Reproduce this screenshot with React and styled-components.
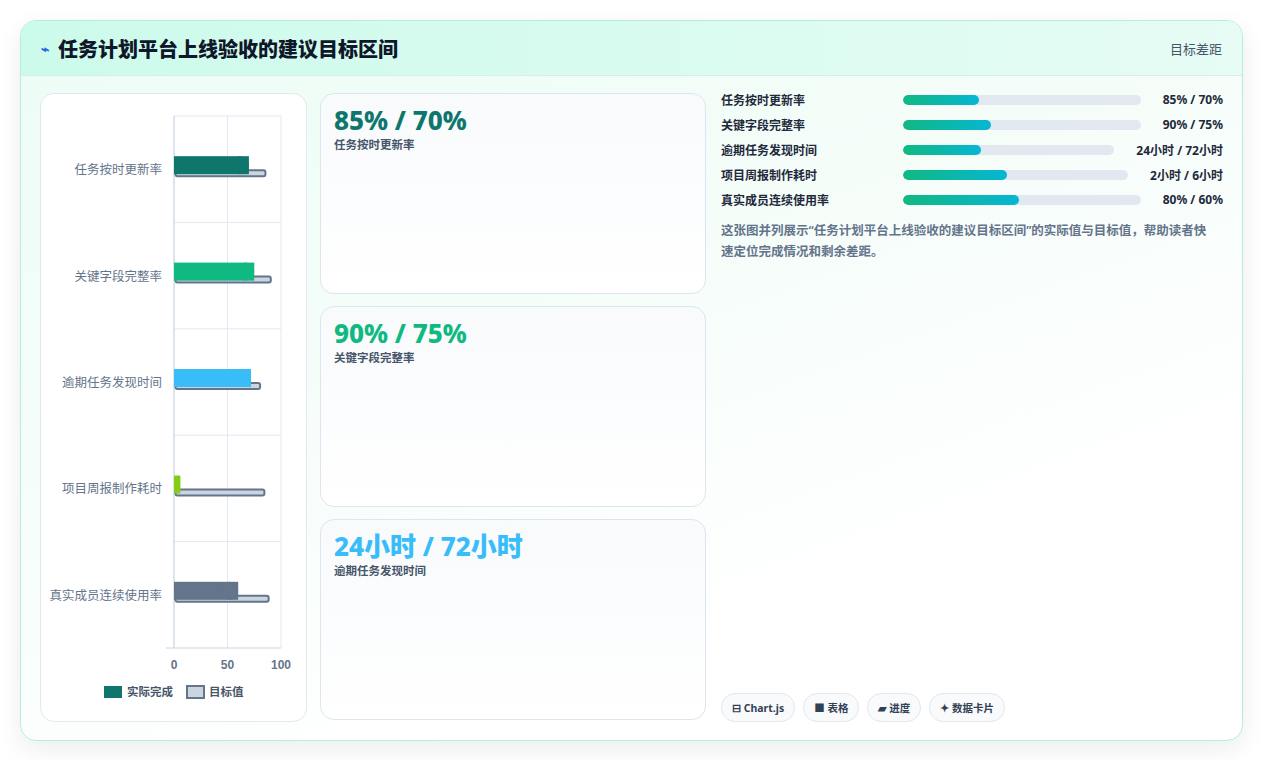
import React from 'react'
import styled, { createGlobalStyle } from 'styled-components'

const Global = createGlobalStyle`
  body { margin: 0; background: #fff; font-family: "Noto Sans", "Noto Sans CJK SC", sans-serif; }
`;

const rows = [
  { name: '任务按时更新率', actual: 70, target: 85, color: '#0f766e', value: '85% / 70%', pct: 32 },
  { name: '关键字段完整率', actual: 75, target: 90, color: '#10b981', value: '90% / 75%', pct: 37 },
  { name: '逾期任务发现时间', actual: 72, target: 80, color: '#38bdf8', value: '24小时 / 72小时', pct: 37 },
  { name: '项目周报制作耗时', actual: 6, target: 84, color: '#84cc16', value: '2小时 / 6小时', pct: 46 },
  { name: '真实成员连续使用率', actual: 60, target: 88, color: '#64748b', value: '80% / 60%', pct: 49 },
];

const cards = [
  { value: '85% / 70%', label: '任务按时更新率', color: '#0f766e' },
  { value: '90% / 75%', label: '关键字段完整率', color: '#10b981' },
  { value: '24小时 / 72小时', label: '逾期任务发现时间', color: '#38bdf8' },
];

function Chart() {
  const x0 = 133, w = 107, top = 22, rowH = 106.4;
  return (
    <svg width="267" height="627" viewBox="0 0 267 627">
      {[0, 50, 100].map((v) => (
        <line key={v} x1={x0 + v * w / 100} x2={x0 + v * w / 100} y1={top} y2={554} stroke="#e2e8f0" />
      ))}
      {rows.map((r, i) => (
        <line key={i} x1={x0} x2={x0 + w} y1={top + i * rowH} y2={top + i * rowH} stroke="#e2e8f0" />
      ))}
      <line x1={x0} x2={x0} y1={top} y2={554} stroke="#cbd5e1" />
      <line x1={x0 - 8} x2={x0 + w} y1={554} y2={554} stroke="#cbd5e1" />
      {rows.map((r, i) => {
        const cy = top + i * rowH + rowH / 2;
        const aw = r.actual * w / 100;
        const tw = r.target * w / 100;
        const rad = Math.min(9, aw);
        return (
          <g key={r.name}>
            <text x={x0 - 12} y={cy + 5} textAnchor="end" fontSize="12.5" fill="#64748b" fontFamily="Noto Sans CJK SC, sans-serif">{r.name}</text>
            <rect x={x0 + 1.5} y={cy + 1} width={tw - 1} height={6} rx={2} fill="#cbd5e1" stroke="#64748b" strokeWidth="2" />
            <rect x={x0} y={cy - 13} width={aw} height={18} rx={rad === 9 ? 0 : 1} fill={r.color} />
            {rad === 9 && <rect x={x0 + aw - 18} y={cy - 13} width={18} height={18} rx={9} fill={r.color} />}
          </g>
        );
      })}
      {[0, 50, 100].map((v) => (
        <text key={v} x={x0 + v * w / 100} y={575} textAnchor="middle" fontSize="12" fontWeight="700" fill="#64748b" fontFamily="Liberation Sans, sans-serif">{v}</text>
      ))}
      <rect x={63} y={592} width={18} height={12} fill="#0f766e" />
      <text x={86} y={602} fontSize="11.5" fill="#475569" fontWeight="700" fontFamily="Noto Sans CJK SC, sans-serif">实际完成</text>
      <rect x={146} y={592} width={17} height={12} fill="#cbd5e1" stroke="#64748b" strokeWidth="2" />
      <text x={168} y={602} fontSize="11.5" fill="#475569" fontWeight="700" fontFamily="Noto Sans CJK SC, sans-serif">目标值</text>
    </svg>
  );
}

export default function App() {
  return (
    <>
      <Global />
      <Page>
        <Frame>
          <Header>
            <Title><Spark>⌁</Spark>任务计划平台上线验收的建议目标区间</Title>
            <HeaderTag>目标差距</HeaderTag>
          </Header>
          <Body>
            <ChartCard><Chart /></ChartCard>
            <CardCol>
              {cards.map((c) => (
                <StatCard key={c.label}>
                  <StatValue color={c.color}>{c.value}</StatValue>
                  <StatLabel>{c.label}</StatLabel>
                </StatCard>
              ))}
            </CardCol>
            <Side>
              {rows.map((r) => (
                <ProgRow key={r.name}>
                  <ProgLabel>{r.name}</ProgLabel>
                  <Track><Fill style={{ width: `${r.pct}%` }} /></Track>
                  <ProgValue>{r.value}</ProgValue>
                </ProgRow>
              ))}
              <Desc>这张图并列展示“任务计划平台上线验收的建议目标区间”的实际值与目标值，帮助读者快速定位完成情况和剩余差距。</Desc>
              <Chips>
                <Chip>⊟ Chart.js</Chip>
                <Chip>■ 表格</Chip>
                <Chip>▰ 进度</Chip>
                <Chip>✦ 数据卡片</Chip>
              </Chips>
            </Side>
          </Body>
        </Frame>
      </Page>
    </>
  );
}

const Page = styled.div`
  padding: 20px 21px 20px 20px;
`;

const Frame = styled.div`
  border: 1px solid #b7ece0;
  border-radius: 16px;
  overflow: hidden;
  background: linear-gradient(160deg, #ecfdf5 0%, #f5fdf9 40%, #ffffff 75%);
  box-shadow: 0 8px 24px rgba(15, 23, 42, 0.08);
`;

const Header = styled.div`
  height: 54px;
  display: flex;
  align-items: center;
  justify-content: space-between;
  padding: 0 20px;
  background: linear-gradient(90deg, #ccfbeb, #e6fcf4);
  border-bottom: 1px solid #d5efe7;
`;

const Title = styled.h1`
  margin: 0;
  font-size: 20px;
  font-weight: 800;
  color: #0f172a;
  display: flex;
  align-items: center;
  gap: 9px;
`;

const Spark = styled.span`
  color: #2563eb;
  font-size: 14px;
`;

const HeaderTag = styled.span`
  font-size: 13px;
  color: #475569;
`;

const Body = styled.div`
  display: grid;
  grid-template-columns: 267px 386px 1fr;
  gap: 13px;
  padding: 17px 19px 18px 19px;
`;

const ChartCard = styled.div`
  height: 627px;
  background: #fff;
  border: 1px solid #e2e8f0;
  border-radius: 14px;
  overflow: hidden;
`;

const CardCol = styled.div`
  display: flex;
  flex-direction: column;
  gap: 12px;
`;

const StatCard = styled.div`
  height: 201px;
  box-sizing: border-box;
  padding: 10px 13px;
  background: linear-gradient(180deg, #f8fafc, #ffffff);
  border: 1px solid #dbe6f0;
  border-radius: 14px;
`;

const StatValue = styled.div`
  font-size: 26px;
  font-weight: 800;
  color: ${(p) => p.color};
  line-height: 32px;
`;

const StatLabel = styled.div`
  font-size: 11.5px;
  color: #475569;
  font-weight: 600;
`;

const Side = styled.div`
  display: flex;
  flex-direction: column;
  padding-left: 2px;
`;

const ProgRow = styled.div`
  display: flex;
  align-items: center;
  height: 25px;
  &:first-child { margin-top: -6px; }
`;

const ProgLabel = styled.div`
  width: 172px;
  font-size: 12px;
  font-weight: 700;
  color: #1e293b;
  white-space: nowrap;
`;

const Track = styled.div`
  flex: 1;
  margin-left: 10px;
  height: 10px;
  border-radius: 5px;
  background: #e2e8f0;
  overflow: hidden;
`;

const Fill = styled.div`
  height: 100%;
  border-radius: 5px;
  background: linear-gradient(90deg, #10b981, #06b6d4);
`;

const ProgValue = styled.div`
  margin-left: 22px;
  font-size: 12px;
  font-weight: 700;
  color: #1e293b;
  white-space: nowrap;
`;

const Desc = styled.p`
  margin: 8px 0 0;
  padding-right: 6px;
  font-size: 12.5px;
  line-height: 21px;
  font-weight: 600;
  color: #64748b;
`;

const Chips = styled.div`
  margin-top: auto;
  display: flex;
  gap: 8px;
`;

const Chip = styled.span`
  height: 27px;
  display: inline-flex;
  align-items: center;
  padding: 0 10px;
  border: 1px solid #e2e8f0;
  border-radius: 14px;
  background: #f8fafc;
  font-size: 10.5px;
  font-weight: 700;
  color: #334155;
`;
